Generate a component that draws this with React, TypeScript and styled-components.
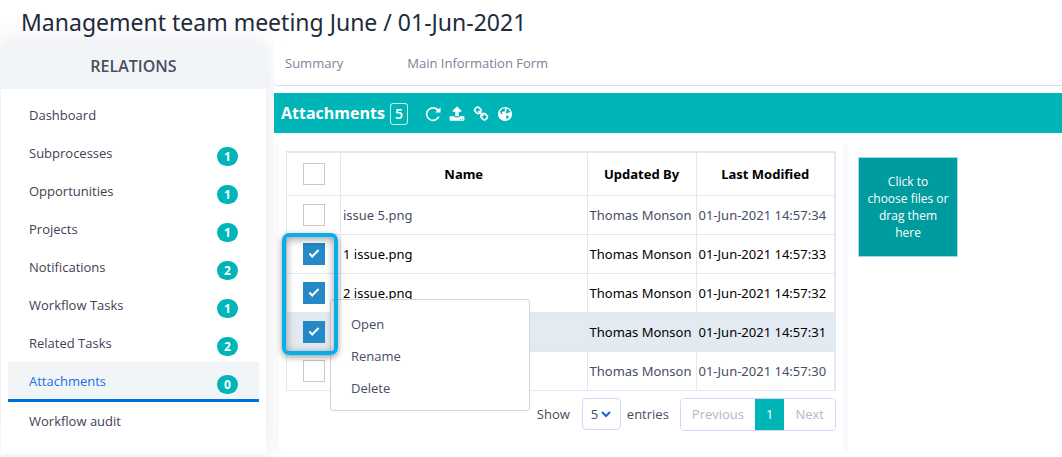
import React, { useState } from "react";
import styled, { createGlobalStyle, css } from "styled-components";

const GlobalStyle = createGlobalStyle`
  *, *::before, *::after { box-sizing: border-box; }
  body {
    margin: 0;
    background: #fff;
    color: #3f4254;
    font-family: "Segoe UI", "Open Sans", "Noto Sans", sans-serif;
    font-size: 13px;
    line-height: 20px;
  }
  button, input, select { font: inherit; color: inherit; }
`;

const Page = styled.div`
  overflow: hidden;
`;

const Title = styled.h1`
  margin: 0;
  padding: 6px 21px 4px;
  font-family: "Segoe UI", "Noto Sans", sans-serif;
  font-size: 23px;
  line-height: 32px;
  font-weight: 400;
  color: #212b3c;
`;

const Columns = styled.div`
  display: flex;
  align-items: flex-start;
  gap: 8px;
  padding-left: 1px;
`;

const Side = styled.aside`
  flex: 0 0 265px;
  display: flex;
  flex-direction: column;
`;

const SidePanel = styled.nav`
  background: #fff;
  border-radius: 6px 6px 0 0;
  overflow: hidden;
`;

const SideFrame = styled.div`
  border-radius: 6px;
  box-shadow: 0 0 26px rgba(70, 65, 110, 0.13);
`;

const SideHeading = styled.h2`
  margin: 0;
  padding: 14px 0 13px;
  background: #f2f5f8;
  text-align: center;
  font-size: 16px;
  line-height: 20px;
  font-weight: 600;
  color: #4a4d60;
`;

const SideList = styled.ul`
  list-style: none;
  margin: 0;
  padding: 7px 7px 14px;
`;

const SideLink = styled.a<{ $active?: boolean }>`
  display: flex;
  justify-content: space-between;
  height: 38px;
  padding: 9px 21px 0;
  color: #3f4254;
  text-decoration: none;
  ${(p) =>
    p.$active &&
    css`
      height: 40px;
      background: #f2f5f8;
      border-bottom: 3px solid #0070e0;
      color: #1b6fe0;
    `}
`;

const Badge = styled.span`
  width: 21px;
  height: 19px;
  margin-top: 4px;
  border-radius: 10px;
  background: #00b5b8;
  color: #fff;
  font-size: 12px;
  line-height: 19px;
  font-weight: 700;
  text-align: center;
`;

const NextPanel = styled.div`
  height: 24px;
  border-radius: 6px 6px 0 0;
  background: #f2f5f8;
`;

const Main = styled.main`
  flex: 1;
  min-width: 0;
  background: #fff;
`;

const Tabs = styled.div`
  display: flex;
  gap: 64px;
  height: 44px;
  padding: 11px 11px 0;
  border-bottom: 1px solid #dcdce0;
  border-bottom-left-radius: 4px;
`;

const Tab = styled.a`
  color: #7e8299;
  text-decoration: none;
`;

const Bar = styled.header`
  display: flex;
  align-items: center;
  height: 40px;
  margin-top: 7px;
  padding: 0 7px;
  background: #00b5b8;
  color: #fff;
`;

const BarTitle = styled.h2`
  margin: 0;
  font-size: 16px;
  line-height: 24px;
  font-weight: 700;
`;

const Count = styled.span`
  width: 18px;
  height: 22px;
  margin: 2px 16px 0 5px;
  border: 1px solid #d5f2f2;
  border-radius: 3px;
  font-size: 14px;
  line-height: 20px;
  font-weight: 600;
  text-align: center;
`;

const Tools = styled.div`
  display: flex;
  gap: 6px;
  padding-top: 2px;
`;

const ToolButton = styled.button`
  display: flex;
  width: 18px;
  height: 18px;
  padding: 1px;
  border: 0;
  background: none;
  color: #fff;
  cursor: pointer;
`;

const Glyph = styled.svg`
  width: 16px;
  height: 16px;
  fill: currentColor;
`;

const Content = styled.div`
  display: flex;
  align-items: flex-start;
  padding-top: 11px;
`;

const Card = styled.section`
  flex: 1;
  min-width: 0;
  padding: 7px 7px 20px;
  border-left: 5px solid #f9f9fb;
  border-right: 5px solid #f9f9fb;
`;

const TableWrap = styled.div`
  position: relative;
  font-family: "Segoe UI", "Noto Sans", sans-serif;
`;

const Table = styled.table`
  width: 100%;
  table-layout: fixed;
  border-collapse: collapse;
  border: 1px solid #e0e9f1;
  border-top-width: 2px;
  border-right-width: 2px;
`;

const Th = styled.th<{ $width?: number }>`
  width: ${(p) => (p.$width ? `${p.$width}px` : "auto")};
  height: 43px;
  padding: 0;
  border: 1px solid #e0e9f1;
  color: #000;
  font-weight: 700;
`;

const Row = styled.tr<{ $checked: boolean; $current?: boolean }>`
  color: ${(p) => (p.$checked ? "#000" : "#464e5f")};
  background: ${(p) => (p.$current ? "#e3eaf2" : "transparent")};
`;

const Td = styled.td<{ $center?: boolean }>`
  height: 39px;
  padding: 0 2px;
  border: 1px solid #e0e9f1;
  white-space: nowrap;
  text-align: ${(p) => (p.$center ? "center" : "left")};
`;

const Check = styled.input`
  appearance: none;
  display: block;
  position: relative;
  width: 22px;
  height: 22px;
  margin: 0 auto;
  border: 1px solid #cdc8c3;
  background: #fff;
  &:checked {
    border-color: #2489c5;
    background: #2489c5;
  }
  &:checked::after {
    content: "";
    position: absolute;
    left: 5px;
    top: 6px;
    width: 10px;
    height: 5px;
    border: solid #fff;
    border-width: 0 0 2px 2px;
    transform: rotate(-45deg);
  }
`;

const Ring = styled.div`
  position: absolute;
  left: -4px;
  top: 82px;
  width: 56px;
  height: 122px;
  border: 4px solid #08aeea;
  border-radius: 7px;
  box-shadow: 0 2px 6px rgba(0, 0, 0, 0.4), inset 0 2px 9px rgba(0, 0, 0, 0.4);
  pointer-events: none;
`;

const Menu = styled.div`
  position: absolute;
  left: 44px;
  top: 148px;
  display: flex;
  flex-direction: column;
  width: 200px;
  padding: 8px 0 6px;
  border: 1px solid #d4d4d4;
  border-radius: 3px;
  background: #fff;
  font-family: "Segoe UI", "Open Sans", sans-serif;
`;

const MenuItem = styled.button`
  height: 32px;
  padding: 0 20px;
  border: 0;
  background: none;
  color: #464e5f;
  text-align: left;
  cursor: pointer;
`;

const Footer = styled.div`
  display: flex;
  justify-content: flex-end;
  align-items: center;
  margin-top: 7px;
  color: #464e5f;
`;

const Length = styled.label`
  display: flex;
  align-items: center;
  margin-right: 11px;
`;

const SelectBox = styled.span`
  position: relative;
  margin: 0 6px 0 12px;
`;

const Select = styled.select`
  appearance: none;
  display: block;
  width: 39px;
  height: 32px;
  padding: 0 8px;
  border: 1px solid #d3d8fa;
  border-radius: 4px;
  background: #fff;
`;

const Chevron = styled.svg`
  position: absolute;
  right: 10px;
  top: 13px;
  width: 10px;
  height: 7px;
  fill: none;
  stroke: #1b62d8;
  stroke-width: 2;
  pointer-events: none;
`;

const Pager = styled.div`
  display: flex;
  height: 33px;
  border: 1px solid #d3d8fa;
  border-radius: 4px;
  overflow: hidden;
`;

const PageButton = styled.button<{ $active?: boolean }>`
  padding: 0 11px;
  border: 0;
  background: ${(p) => (p.$active ? "#00b5b8" : "#fff")};
  color: ${(p) => (p.$active ? "#fff" : "#b5b9c4")};
  cursor: pointer;
`;

const DropArea = styled.div`
  flex: 0 0 214px;
  padding: 13px 10px;
`;

const DropZone = styled.button`
  width: 100px;
  height: 100px;
  padding: 0 8px;
  border: 1px solid #a5d9e6;
  background: #009b9e;
  color: #fff;
  font-size: 12px;
  line-height: 17px;
  cursor: pointer;
`;

const DropText = styled.span`
  display: block;
  white-space: pre-line;
`;

const links: [string, number | null][] = [
  ["Dashboard", null],
  ["Subprocesses", 1],
  ["Opportunities", 1],
  ["Projects", 1],
  ["Notifications", 2],
  ["Workflow Tasks", 1],
  ["Related Tasks", 2],
  ["Attachments", 0],
  ["Workflow audit", null],
];

const files = [
  { name: "issue 5.png", time: "01-Jun-2021 14:57:34", checked: false },
  { name: "1 issue.png", time: "01-Jun-2021 14:57:33", checked: true },
  { name: "2 issue.png", time: "01-Jun-2021 14:57:32", checked: true },
  { name: "", time: "01-Jun-2021 14:57:31", checked: true, current: true },
  { name: "", time: "01-Jun-2021 14:57:30", checked: false },
];

const tools = [
  {
    label: "Refresh",
    path: "M1740 130v600h-600l210-210a610 610 0 1 0 90 640l190 70a800 800 0 1 1-130-860z",
  },
  {
    label: "Upload",
    path: "M1344 1472q0-26-19-45t-45-19-45 19-19 45 19 45 45 19 45-19 19-45zm256 0q0-26-19-45t-45-19-45 19-19 45 19 45 45 19 45-19 19-45zm128-224v320q0 40-28 68t-68 28h-1472q-40 0-68-28t-28-68v-320q0-40 28-68t68-28h427q21 56 70.5 92t110.5 36h256q61 0 110.5-36t70.5-92h427q40 0 68 28t28 68zm-325-648q-17 40-59 40h-256v448q0 26-19 45t-45 19h-256q-26 0-45-19t-19-45v-448h-256q-42 0-59-40-17-39 14-69l448-448q18-19 45-19t45 19l448 448q31 30 14 69z",
  },
  {
    label: "Link",
    path: "M1520 1216q0-40-28-68l-208-208q-28-28-68-28-42 0-72 32 3 3 19 18.5t21.5 21.5 15 19 13 25.5 3.5 27.5q0 40-28 68t-68 28q-15 0-27.5-3.5t-25.5-13-19-15-21.5-21.5-18.5-19q-33 31-33 73 0 40 28 68l206 207q27 27 68 27 40 0 68-26l147-146q28-28 28-67zm-703-705q0-40-28-68l-206-207q-28-28-68-28-39 0-68 27l-147 146q-28 28-28 67 0 40 28 68l208 208q27 27 68 27 42 0 72-31-3-3-19-18.5t-21.5-21.5-15-19-13-25.5-3.5-27.5q0-40 28-68t68-28q15 0 27.5 3.5t25.5 13 19 15 21.5 21.5 18.5 19q33-31 33-73zm895 705q0 120-85 203l-147 146q-83 83-203 83-121 0-204-85l-206-207q-83-83-83-203 0-123 88-209l-88-88q-86 88-208 88-120 0-204-84l-208-208q-84-84-84-204t85-203l147-146q83-83 203-83 121 0 204 85l206 207q83 83 83 203 0 123-88 209l88 88q86-88 208-88 120 0 204 84l208 208q84 84 84 204z",
  },
  {
    label: "Web",
    path: "M896 100a796 796 0 1 0 0 1592a796 796 0 1 0 0-1592zM400 500l230-210 230-50 80 90-110 100 80 90-130 110-180-10-70 130 130 130-60 70-170-130-110-180zM1080 330l200 30 210 270-90 130-150-20-100 110-160-60-30-150 140-70-70-110zM1000 1150l150-80 200 100-90 170-170 130-50-150z",
  },
];

export default function App() {
  const [checked, setChecked] = useState(files.map((f) => f.checked));
  const toggle = (i: number) => setChecked((c) => c.map((v, n) => (n === i ? !v : v)));

  return (
    <Page>
      <GlobalStyle />
      <Title>Management team meeting June / 01-Jun-2021</Title>
      <Columns>
        <Side>
          <SideFrame>
            <SidePanel aria-label="Relations">
              <SideHeading>RELATIONS</SideHeading>
              <SideList>
                {links.map(([label, count]) => (
                  <li key={label}>
                    <SideLink href="#" $active={label === "Attachments"}>
                      {label}
                      {count !== null && <Badge>{count}</Badge>}
                    </SideLink>
                  </li>
                ))}
              </SideList>
            </SidePanel>
          </SideFrame>
          <NextPanel />
        </Side>
        <Main>
          <Tabs>
            <Tab href="#">Summary</Tab>
            <Tab href="#">Main Information Form</Tab>
          </Tabs>
          <Bar>
            <BarTitle>Attachments</BarTitle>
            <Count>5</Count>
            <Tools>
              {tools.map((t) => (
                <ToolButton key={t.label} aria-label={t.label}>
                  <Glyph viewBox="0 0 1792 1792" fillRule="evenodd">
                    <path d={t.path} />
                  </Glyph>
                </ToolButton>
              ))}
            </Tools>
          </Bar>
          <Content>
            <Card>
              <TableWrap>
                <Table>
                  <thead>
                    <tr>
                      <Th $width={54}>
                        <Check type="checkbox" aria-label="Select all" />
                      </Th>
                      <Th>Name</Th>
                      <Th $width={109}>Updated By</Th>
                      <Th $width={139}>Last Modified</Th>
                    </tr>
                  </thead>
                  <tbody>
                    {files.map((f, i) => (
                      <Row key={f.time} $checked={checked[i]} $current={f.current}>
                        <Td $center>
                          <Check
                            type="checkbox"
                            aria-label={`Select file ${i + 1}`}
                            checked={checked[i]}
                            onChange={() => toggle(i)}
                          />
                        </Td>
                        <Td>{f.name}</Td>
                        <Td>Thomas Monson</Td>
                        <Td>{f.time}</Td>
                      </Row>
                    ))}
                  </tbody>
                </Table>
                <Menu role="menu">
                  <MenuItem role="menuitem">Open</MenuItem>
                  <MenuItem role="menuitem">Rename</MenuItem>
                  <MenuItem role="menuitem">Delete</MenuItem>
                </Menu>
                <Ring />
              </TableWrap>
              <Footer>
                <Length>
                  Show
                  <SelectBox>
                    <Select defaultValue="5">
                      <option>5</option>
                      <option>10</option>
                    </Select>
                    <Chevron viewBox="0 0 10 7">
                      <path d="M1 1l4 4 4-4" />
                    </Chevron>
                  </SelectBox>
                  entries
                </Length>
                <Pager>
                  <PageButton>Previous</PageButton>
                  <PageButton $active>1</PageButton>
                  <PageButton>Next</PageButton>
                </Pager>
              </Footer>
            </Card>
            <DropArea>
              <DropZone>
                <DropText>{"Click to\nchoose files or\ndrag them\nhere"}</DropText>
              </DropZone>
            </DropArea>
          </Content>
        </Main>
      </Columns>
    </Page>
  );
}
